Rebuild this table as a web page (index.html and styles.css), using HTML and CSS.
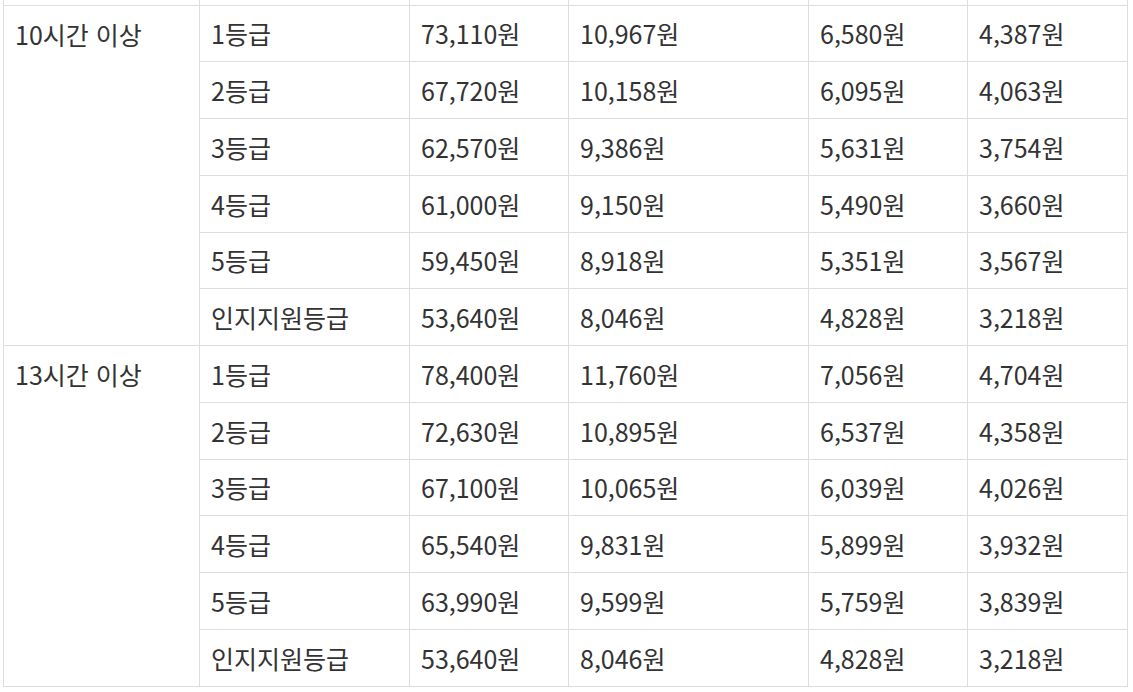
FILE: index.html
```html
<!DOCTYPE html>
<html lang="ko">
<head>
<meta charset="utf-8">
<title>요금표</title>
<link rel="stylesheet" href="styles.css">
</head>
<body>
<table class="fee">
<colgroup>
<col class="c1"><col class="c2"><col class="c3"><col class="c4"><col class="c5"><col class="c6">
</colgroup>
<tbody>
<tr class="spacer"><td></td><td></td><td></td><td></td><td></td><td></td></tr>
<tr><td rowspan="6" class="grp">10시간 이상</td><td>1등급</td><td>73,110원</td><td>10,967원</td><td>6,580원</td><td>4,387원</td></tr>
<tr><td>2등급</td><td>67,720원</td><td>10,158원</td><td>6,095원</td><td>4,063원</td></tr>
<tr><td>3등급</td><td>62,570원</td><td>9,386원</td><td>5,631원</td><td>3,754원</td></tr>
<tr><td>4등급</td><td>61,000원</td><td>9,150원</td><td>5,490원</td><td>3,660원</td></tr>
<tr><td>5등급</td><td>59,450원</td><td>8,918원</td><td>5,351원</td><td>3,567원</td></tr>
<tr><td>인지지원등급</td><td>53,640원</td><td>8,046원</td><td>4,828원</td><td>3,218원</td></tr>
<tr><td rowspan="6" class="grp">13시간 이상</td><td>1등급</td><td>78,400원</td><td>11,760원</td><td>7,056원</td><td>4,704원</td></tr>
<tr><td>2등급</td><td>72,630원</td><td>10,895원</td><td>6,537원</td><td>4,358원</td></tr>
<tr><td>3등급</td><td>67,100원</td><td>10,065원</td><td>6,039원</td><td>4,026원</td></tr>
<tr><td>4등급</td><td>65,540원</td><td>9,831원</td><td>5,899원</td><td>3,932원</td></tr>
<tr><td>5등급</td><td>63,990원</td><td>9,599원</td><td>5,759원</td><td>3,839원</td></tr>
<tr><td>인지지원등급</td><td>53,640원</td><td>8,046원</td><td>4,828원</td><td>3,218원</td></tr>
</tbody>
</table>
</body>
</html>
```

FILE: styles.css
```css
html, body {
  margin: 0;
  padding: 0;
  background: #ffffff;
}
body {
  padding-left: 3px;
}
.fee {
  border-collapse: collapse;
  table-layout: fixed;
  width: 1124px;
  font-family: "Noto Sans CJK KR", "Noto Sans", sans-serif;
  font-size: 25px;
  color: #333333;
}
.c1 { width: 196px; }
.c2 { width: 210px; }
.c3 { width: 159px; }
.c4 { width: 240px; }
.c5 { width: 159px; }
.c6 { width: 160px; }
.fee td {
  border: 1px solid #dddddd;
  padding: 0 11px;
  height: 56.75px;
  box-sizing: border-box;
  vertical-align: middle;
  line-height: 30px;
  white-space: nowrap;
}
.fee .spacer td {
  border-top: none;
  height: 5px;
  padding: 0;
}
.fee td.grp {
  vertical-align: top;
  padding-top: 13px;
  padding-left: 11px;
}
```
